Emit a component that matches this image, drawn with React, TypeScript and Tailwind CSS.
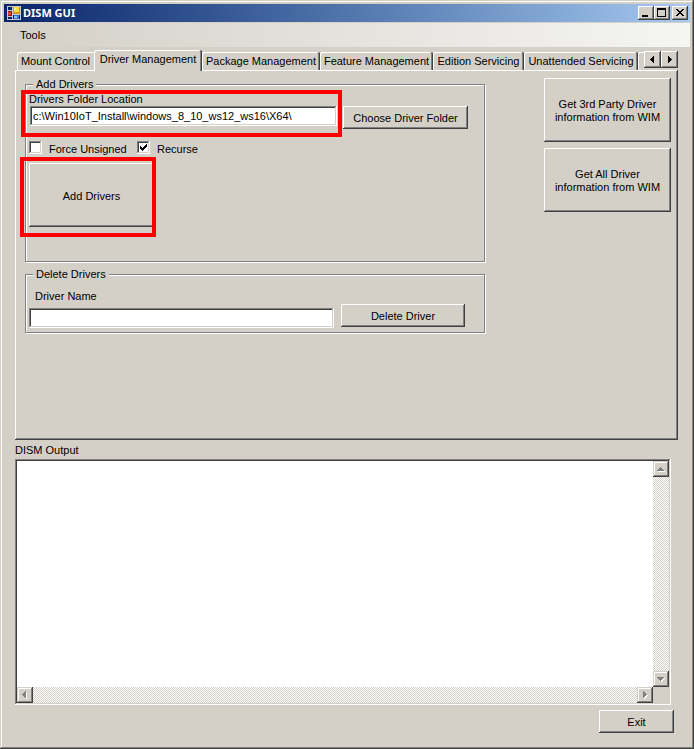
import { useState } from "react";
import type { ButtonHTMLAttributes, InputHTMLAttributes, ReactNode } from "react";
import clsx from "clsx";

// Classic 3D edges
const RAISED =
  "bg-[#d4d0c8] shadow-[inset_-1px_-1px_0_#404040,inset_1px_1px_0_#fff,inset_-2px_-2px_0_#808080]";
const RAISED_SOFT =
  "bg-[#d4d0c8] shadow-[inset_-1px_-1px_0_#404040,inset_1px_1px_0_#d4d0c8,inset_-2px_-2px_0_#808080,inset_2px_2px_0_#fff]";
const SUNKEN =
  "bg-white shadow-[inset_-1px_-1px_0_#fff,inset_1px_1px_0_#808080,inset_-2px_-2px_0_#d4d0c8,inset_2px_2px_0_#404040]";
const DITHER =
  "bg-[repeating-conic-gradient(#fff_0_25%,#d4d0c8_0_50%)] bg-[length:2px_2px]";

const tabs = [
  { label: "Mount Control", width: "w-[77px]" },
  { label: "Driver Management", width: "w-[108px]" },
  { label: "Package Management", width: "w-[118px]" },
  { label: "Feature Management", width: "w-[113px]" },
  { label: "Edition Servicing", width: "w-[91px]" },
  { label: "Unattended Servicing", width: "w-[114px]" },
  { label: "", width: "w-[60px]" },
];

const Button = ({ className, ...props }: ButtonHTMLAttributes<HTMLButtonElement>) => (
  <button type="button" className={clsx(RAISED, "shrink-0 pt-[2px] text-center", className)} {...props} />
);

const TextBox = ({ className, ...props }: InputHTMLAttributes<HTMLInputElement>) => (
  <input type="text" className={clsx(SUNKEN, "h-5 min-w-0 px-[3px] outline-none", className)} {...props} />
);

const GroupBox = ({ title, className, children }: { title: string; className?: string; children: ReactNode }) => (
  <fieldset
    className={clsx(
      "min-w-0 border border-[#808080] pl-[3px] shadow-[1px_1px_0_#fff,inset_1px_1px_0_#fff]",
      className
    )}
  >
    <legend className="ml-1 bg-[#d4d0c8] px-[3px]">{title}</legend>
    {children}
  </fieldset>
);

interface CheckBoxProps {
  label: string;
  checked: boolean;
  onChange: (checked: boolean) => void;
  className?: string;
}

const CheckBox = ({ label, checked, onChange, className }: CheckBoxProps) => (
  <label className={clsx("flex h-[13px] items-start gap-[7px]", className)}>
    <span className="relative h-[13px] w-[13px]">
      <input
        type="checkbox"
        checked={checked}
        onChange={(e) => onChange(e.target.checked)}
        className={clsx(SUNKEN, "block h-[13px] w-[13px] appearance-none")}
      />
      {checked && (
        <svg viewBox="0 0 13 13" className="pointer-events-none absolute inset-0" shapeRendering="crispEdges">
          <path d="M3 5h1v1h1v1h1v-1h1v-1h1v-1h1v-1h1v3h-1v1h-1v1h-1v1h-1v1h-1v-1h-1v-1h-1z" />
        </svg>
      )}
    </span>
    <span className="leading-4">{label}</span>
  </label>
);

const Highlight = ({ className }: { className: string }) => (
  <div className={clsx("pointer-events-none absolute z-10 border-4 border-[#ff0000]", className)} />
);

const arrows = {
  up: "M7 6h1v1h1v1h1v1h1v1h-7v-1h1v-1h1v-1h1z",
  down: "M4 6h7v1h-1v1h-1v1h-1v1h-1v-1h-1v-1h-1v-1h-1z",
  left: "M9 4v7h-1v-1h-1v-1h-1v-1h-1v-1h1v-1h1v-1h1v-1z",
  right: "M6 4v7h1v-1h1v-1h1v-1h1v-1h-1v-1h-1v-1h-1v-1z",
};

interface ArrowButtonProps {
  dir: keyof typeof arrows;
  disabled?: boolean;
  className?: string;
}

const ArrowButton = ({ dir, disabled, className }: ArrowButtonProps) => (
  <button
    type="button"
    aria-label={`Scroll ${dir}`}
    disabled={disabled}
    className={clsx("flex shrink-0 items-center justify-center", className)}
  >
    <svg width="16" height="16" viewBox="0 0 16 16" shapeRendering="crispEdges">
      {disabled && <path d={arrows[dir]} fill="#fff" transform="translate(1 1)" />}
      <path d={arrows[dir]} fill={disabled ? "#808080" : "#000"} />
    </svg>
  </button>
);

const AppIcon = () => (
  <svg width="14" height="14" viewBox="0 0 14 14" shapeRendering="crispEdges">
    <rect width="14" height="14" fill="#c8c8c8" />
    <rect x="1" y="1" width="4" height="3" fill="#0a246a" />
    <rect x="1" y="11" width="4" height="2" fill="#0a246a" />
    <rect x="6" y="9" width="7" height="4" fill="#0a246a" />
    <rect x="1" y="5" width="4" height="5" fill="#a01010" />
    <rect x="1" y="6" width="3" height="3" fill="#e04030" />
    <rect x="6" y="1" width="7" height="7" fill="#d89a10" />
    <rect x="7" y="1" width="5" height="5" fill="#ffd84a" />
    <rect x="7" y="2" width="2" height="2" fill="#fff0a0" />
    <rect x="7" y="9" width="5" height="4" fill="#3a78d8" />
    <rect x="7" y="10" width="3" height="2" fill="#8cc0ff" />
  </svg>
);

const TitleBar = () => (
  <header className="flex h-[18px] items-center bg-linear-to-r from-[#0a246a] to-[#a6caf0] pr-[2px] pl-[3px]">
    <AppIcon />
    <h1 className="ml-[2px] flex-1 font-['Noto_Sans',sans-serif] text-[11px] leading-[18px] font-bold text-white">
      DISM GUI
    </h1>
    <button type="button" aria-label="Minimize" className={clsx(RAISED, "h-[14px] w-4")}>
      <svg width="16" height="14" shapeRendering="crispEdges">
        <rect x="4" y="9" width="6" height="2" />
      </svg>
    </button>
    <button type="button" aria-label="Maximize" className={clsx(RAISED, "h-[14px] w-4")}>
      <svg width="16" height="14" shapeRendering="crispEdges">
        <path fillRule="evenodd" d="M3 2h9v9h-9zM4 4v6h7v-6z" />
      </svg>
    </button>
    <button type="button" aria-label="Close" className={clsx(RAISED, "ml-[2px] h-[14px] w-4")}>
      <svg width="16" height="14" shapeRendering="crispEdges">
        <path d="M4 3h2v1h1v1h2v-1h1v-1h2v1h-1v1h-1v1h-1v1h1v1h1v1h1v1h-2v-1h-1v-1h-2v1h-1v1h-2v-1h1v-1h1v-1h1v-1h-1v-1h-1v-1h-1z" />
      </svg>
    </button>
  </header>
);

const DriverManagement = () => {
  const [folder, setFolder] = useState("c:\\Win10IoT_Install\\windows_8_10_ws12_ws16\\X64\\");
  const [driverName, setDriverName] = useState("");
  const [forceUnsigned, setForceUnsigned] = useState(false);
  const [recurse, setRecurse] = useState(true);

  return (
    <div className="flex items-start gap-[59px]">
      <div className="flex min-w-0 flex-1 flex-col gap-[6px]">
        <GroupBox title="Add Drivers" className="pb-[34px]">
          <div className="flex items-start gap-[6px] pt-[2px] pr-4">
            <div className="relative flex min-w-0 flex-1 flex-col">
              <label htmlFor="folder">Drivers Folder Location</label>
              <TextBox
                id="folder"
                value={folder}
                onChange={(e) => setFolder(e.target.value)}
                className="ml-px"
              />
              <Highlight className="-top-[3px] -right-[5px] -bottom-[11px] -left-2" />
            </div>
            <Button className="mt-[13px] h-[23px] w-[125px]">Choose Driver Folder</Button>
          </div>
          <div className="mt-3 flex">
            <CheckBox
              label="Force Unsigned"
              checked={forceUnsigned}
              onChange={setForceUnsigned}
              className="w-[108px]"
            />
            <CheckBox label="Recurse" checked={recurse} onChange={setRecurse} />
          </div>
          <div className="relative mt-[9px] w-[125px]">
            <Button className="block h-16 w-full">Add Drivers</Button>
            <Highlight className="-top-[6px] -right-[2px] -bottom-[10px] -left-[9px]" />
          </div>
        </GroupBox>

        <GroupBox title="Delete Drivers" className="pb-1">
          <div className="flex items-end gap-[7px] pt-[9px] pr-[19px]">
            <div className="flex min-w-0 flex-1 flex-col gap-[5px]">
              <label htmlFor="driver-name" className="pl-[6px]">
                Driver Name
              </label>
              <TextBox id="driver-name" value={driverName} onChange={(e) => setDriverName(e.target.value)} />
            </div>
            <Button className="mb-px h-[23px] w-[124px]">Delete Driver</Button>
          </div>
        </GroupBox>
      </div>

      <div className="flex w-[127px] shrink-0 flex-col gap-[6px]">
        <Button className="h-16">
          Get 3rd Party Driver
          <br />
          information from WIM
        </Button>
        <Button className="h-16">
          Get All Driver
          <br />
          information from WIM
        </Button>
      </div>
    </div>
  );
};

const App = () => {
  const [activeTab, setActiveTab] = useState(1);
  const [output, setOutput] = useState("");

  return (
    <div className="flex min-h-screen flex-col bg-[#d4d0c8] p-1 font-['Liberation_Sans',Arial,sans-serif] text-[11px] leading-[13px] text-black shadow-[inset_-1px_-1px_0_#404040,inset_1px_1px_0_#d4d0c8,inset_-2px_-2px_0_#808080,inset_2px_2px_0_#fff]">
      <TitleBar />

      <nav className="mt-px flex h-6 items-center bg-linear-to-r from-[#d4d0c8] to-[#f5f5f3] pl-[10px]">
        <button type="button" className="px-[6px]">
          Tools
        </button>
      </nav>

      <main className="flex flex-1 flex-col pt-[3px] pr-3 pb-3 pl-[11px]">
        <div className="flex h-5 items-start pl-[2px]">
          <div role="tablist" className="flex h-[21px] min-w-0 flex-1 items-end overflow-hidden">
            {tabs.map((tab, i) => (
              <button
                key={i}
                type="button"
                role="tab"
                aria-selected={i === activeTab}
                onClick={() => setActiveTab(i)}
                className={clsx(
                  "shrink-0 rounded-t-[2px] bg-[#d4d0c8] text-center whitespace-nowrap",
                  // the selected tab covers the right edge of the one before it
                  i === activeTab - 1
                    ? "shadow-[inset_1px_1px_0_#fff]"
                    : "shadow-[inset_-1px_0_0_#404040,inset_1px_1px_0_#fff,inset_-2px_0_0_#808080]",
                  tab.width,
                  i === activeTab ? "relative z-10 h-[21px] pb-[2px]" : "mb-px h-[18px]"
                )}
              >
                {tab.label}
              </button>
            ))}
          </div>
          <ArrowButton dir="left" className={clsx(RAISED, "mt-px h-[17px] w-[17px]")} />
          <ArrowButton dir="right" className={clsx(RAISED, "mt-px h-[17px] w-[17px]")} />
        </div>

        <section
          role="tabpanel"
          className="pt-2 pr-[7px] pb-[107px] pl-[10px] shadow-[inset_-1px_-1px_0_#404040,inset_1px_1px_0_#fff,inset_-2px_-2px_0_#808080]"
        >
          <DriverManagement />
        </section>

        <label htmlFor="output" className="mt-1 mb-[2px]">
          DISM Output
        </label>
        <div className={clsx(SUNKEN, "mr-[7px] grid flex-1 grid-cols-[1fr_16px] grid-rows-[1fr_16px] p-[2px]")}>
          <textarea
            id="output"
            value={output}
            onChange={(e) => setOutput(e.target.value)}
            className="resize-none overflow-hidden px-px outline-none"
          />
          <div className={clsx(DITHER, "flex flex-col justify-between")}>
            <ArrowButton dir="up" disabled className={clsx(RAISED_SOFT, "h-4 w-4")} />
            <ArrowButton dir="down" disabled className={clsx(RAISED_SOFT, "h-4 w-4")} />
          </div>
          <div className={clsx(DITHER, "flex justify-between")}>
            <ArrowButton dir="left" disabled className={clsx(RAISED_SOFT, "h-4 w-4")} />
            <ArrowButton dir="right" disabled className={clsx(RAISED_SOFT, "h-4 w-4")} />
          </div>
          <div className="bg-[#d4d0c8]" />
        </div>

        <Button className="mt-[5px] mr-1 h-[23px] w-[75px] self-end">Exit</Button>
      </main>
    </div>
  );
};

export default App;
